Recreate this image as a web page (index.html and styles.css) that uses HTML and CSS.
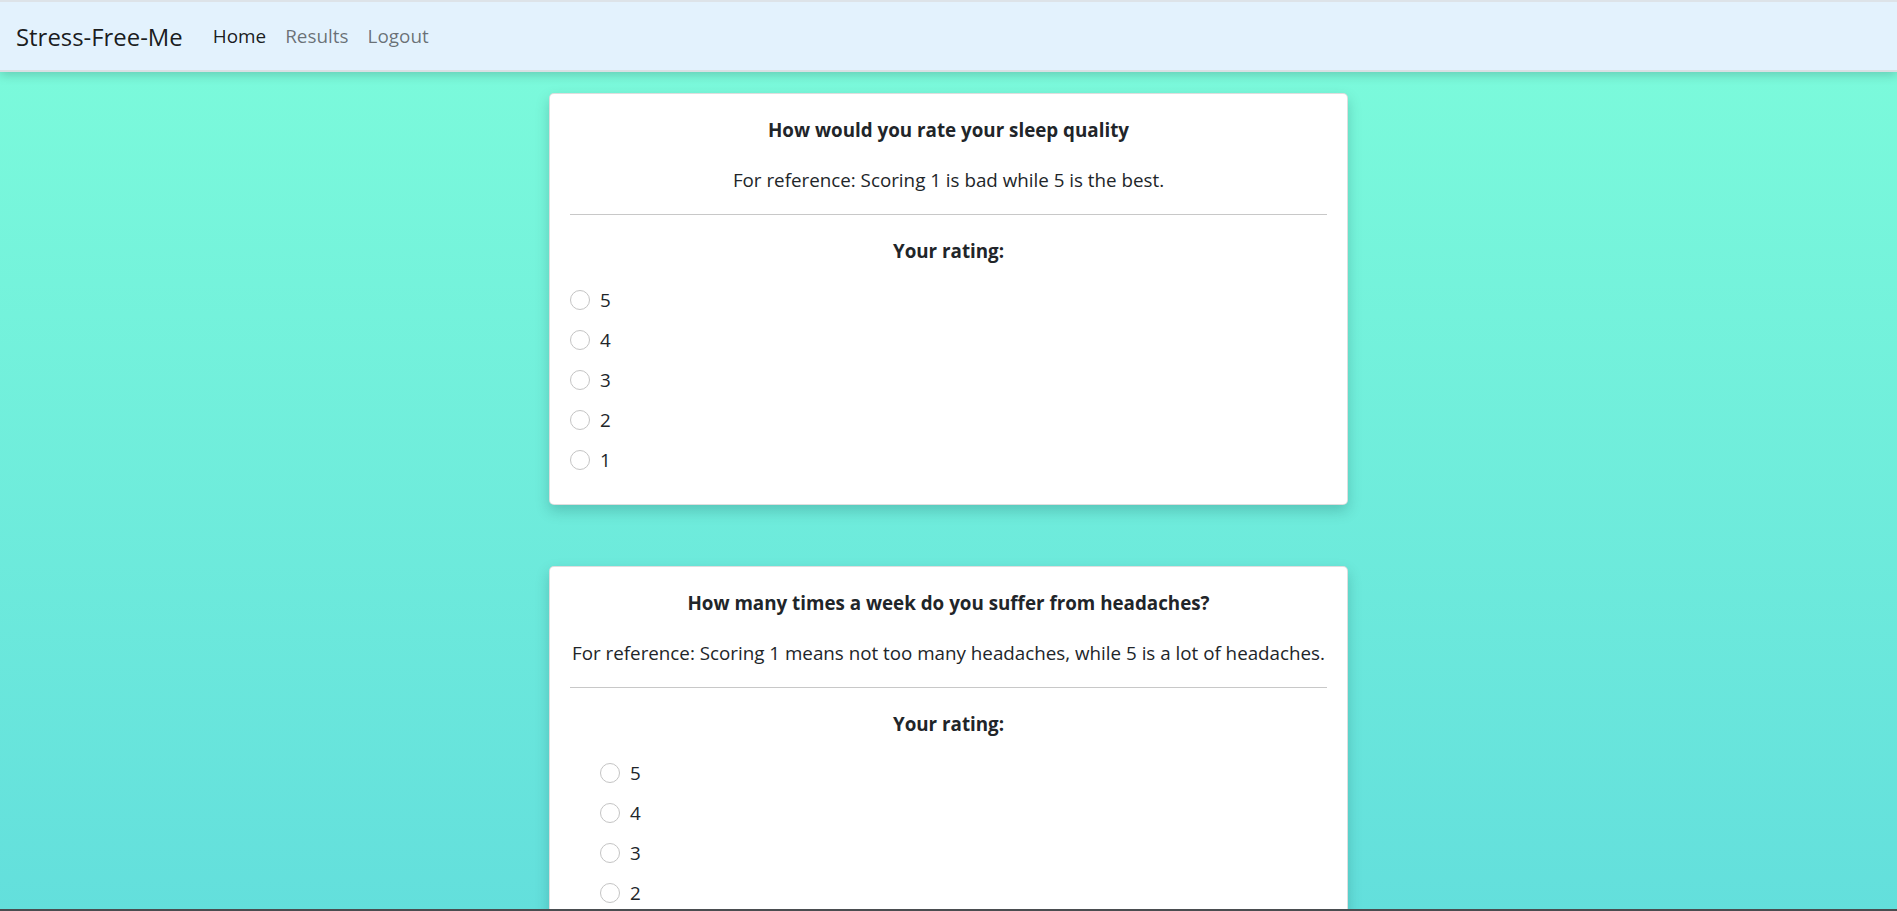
FILE: index.html
```html
<!DOCTYPE html>
<html lang="en">
<head>
<meta charset="utf-8">
<title>Stress-Free-Me</title>
<link rel="stylesheet" href="styles.css">
</head>
<body>
<nav class="navbar">
  <a class="brand" href="#">Stress-Free-Me</a>
  <ul class="nav-links">
    <li><a class="nav-link active" href="#">Home</a></li>
    <li><a class="nav-link" href="#">Results</a></li>
    <li><a class="nav-link" href="#">Logout</a></li>
  </ul>
</nav>
<main class="questions">
  <section class="card">
    <p class="q-title">How would you rate your sleep quality</p>
    <p class="q-ref">For reference: Scoring 1 is bad while 5 is the best.</p>
    <hr class="divider">
    <p class="q-rating">Your rating:</p>
    <div class="options">
      <label class="option"><span class="radio"></span><span>5</span></label>
      <label class="option"><span class="radio"></span><span>4</span></label>
      <label class="option"><span class="radio"></span><span>3</span></label>
      <label class="option"><span class="radio"></span><span>2</span></label>
      <label class="option"><span class="radio"></span><span>1</span></label>
    </div>
  </section>
  <section class="card">
    <p class="q-title">How many times a week do you suffer from headaches?</p>
    <p class="q-ref">For reference: Scoring 1 means not too many headaches, while 5 is a lot of headaches.</p>
    <hr class="divider">
    <p class="q-rating">Your rating:</p>
    <div class="options indented">
      <label class="option"><span class="radio"></span><span>5</span></label>
      <label class="option"><span class="radio"></span><span>4</span></label>
      <label class="option"><span class="radio"></span><span>3</span></label>
      <label class="option"><span class="radio"></span><span>2</span></label>
      <label class="option"><span class="radio"></span><span>1</span></label>
    </div>
  </section>
</main>
<div class="window-edge"></div>
</body>
</html>
```
FILE: styles.css
```css
* { box-sizing: border-box; }
html, body { margin: 0; padding: 0; }
body {
  font-family: "Open Sans", "Noto Sans", sans-serif;
  font-size: 18.8px;
  color: #212529;
  background: linear-gradient(180deg, #7dfcdb 0px, #63dfdc 911px) no-repeat;
  background-color: #63dfdc;
  min-height: 100vh;
}
.navbar {
  height: 72px;
  background: #e3f2fd;
  border-top: 2px solid #dde3e8;
  border-bottom: 2px solid #d9dfe3;
  box-shadow: 0 3px 10px rgba(0, 0, 0, 0.18);
  display: flex;
  align-items: center;
  padding: 0 0 0 16px;
  position: relative;
  z-index: 2;
}
.brand {
  font-size: 23.9px;
  color: rgba(0, 0, 0, 0.9);
  text-decoration: none;
  margin-right: 30px;
}
.nav-links {
  list-style: none;
  display: flex;
  margin: 0;
  padding: 0;
  gap: 19px;
}
.nav-link {
  font-size: 18.9px;
  color: rgba(0, 0, 0, 0.55);
  text-decoration: none;
}
.nav-link.active { color: rgba(0, 0, 0, 0.9); }
.questions {
  display: flex;
  flex-direction: column;
  align-items: center;
  gap: 61px;
  padding-top: 21px;
}
.card {
  width: 799px;
  background: #fff;
  border: 1px solid rgba(0, 0, 0, 0.13);
  border-radius: 5px;
  padding: 21px 20px 29px;
  box-shadow: 0 6px 14px rgba(0, 60, 60, 0.22);
}
.card p { margin: 0; line-height: 30px; text-align: center; }
.q-title { font-weight: 700; margin-bottom: 20px !important; }
.q-ref { margin-bottom: 19px !important; white-space: nowrap; }
.divider {
  border: 0;
  border-top: 1px solid #c8c8c8;
  margin: 0 0 21px;
}
.q-rating { font-weight: 700; margin-bottom: 19px !important; }
.options { display: flex; flex-direction: column; gap: 10px; }
.options.indented { padding-left: 30px; }
.option { display: flex; align-items: center; gap: 10px; height: 30px; }
.radio {
  width: 20px;
  height: 20px;
  border: 1px solid #c4c4c4;
  border-radius: 50%;
  background: #fff;
  flex: none;
}
.window-edge {
  position: fixed;
  left: 0;
  right: 0;
  bottom: 0;
  height: 2px;
  background: #4a4d50;
  z-index: 5;
}
```
